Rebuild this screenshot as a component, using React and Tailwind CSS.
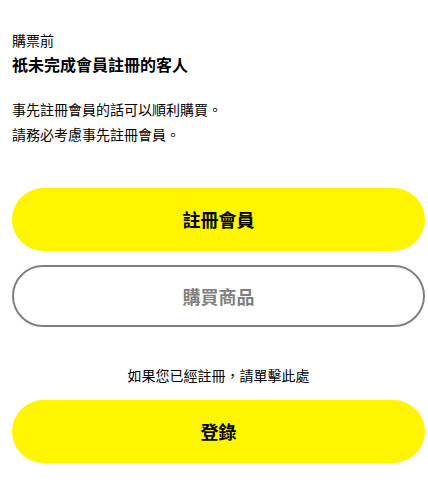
export default function App() {
  return (
    <div
      className="min-h-screen bg-white pl-3 pr-[3px] pt-[30px] text-black"
      style={{ fontFamily: '"Noto Sans CJK TC", "Noto Sans", sans-serif' }}
    >
      <p className="text-[14px] leading-[20px]">購票前</p>
      <h2 className="mt-[2px] text-[16px] font-bold leading-[24px]">祇未完成會員註冊的客人</h2>
      <div className="mt-[21px] text-[14px] leading-[25px]">
        <p>事先註冊會員的話可以順利購買。</p>
        <p>請務必考慮事先註冊會員。</p>
      </div>

      <button className="mt-[41px] flex h-[63px] w-full items-center justify-center rounded-full bg-[#fff500] text-[18px] font-bold">
        註冊會員
      </button>
      <button className="mt-[14px] flex h-[62px] w-full items-center justify-center rounded-full border-2 border-[#808080] bg-white text-[18px] font-bold text-[#808080]">
        購買商品
      </button>

      <p className="mt-[38px] text-center text-[14px] leading-[20px]">如果您已經註冊，請單擊此處</p>

      <button className="mt-[15px] flex h-[63px] w-full items-center justify-center rounded-full bg-[#fff500] text-[18px] font-bold">
        登錄
      </button>
    </div>
  )
}
